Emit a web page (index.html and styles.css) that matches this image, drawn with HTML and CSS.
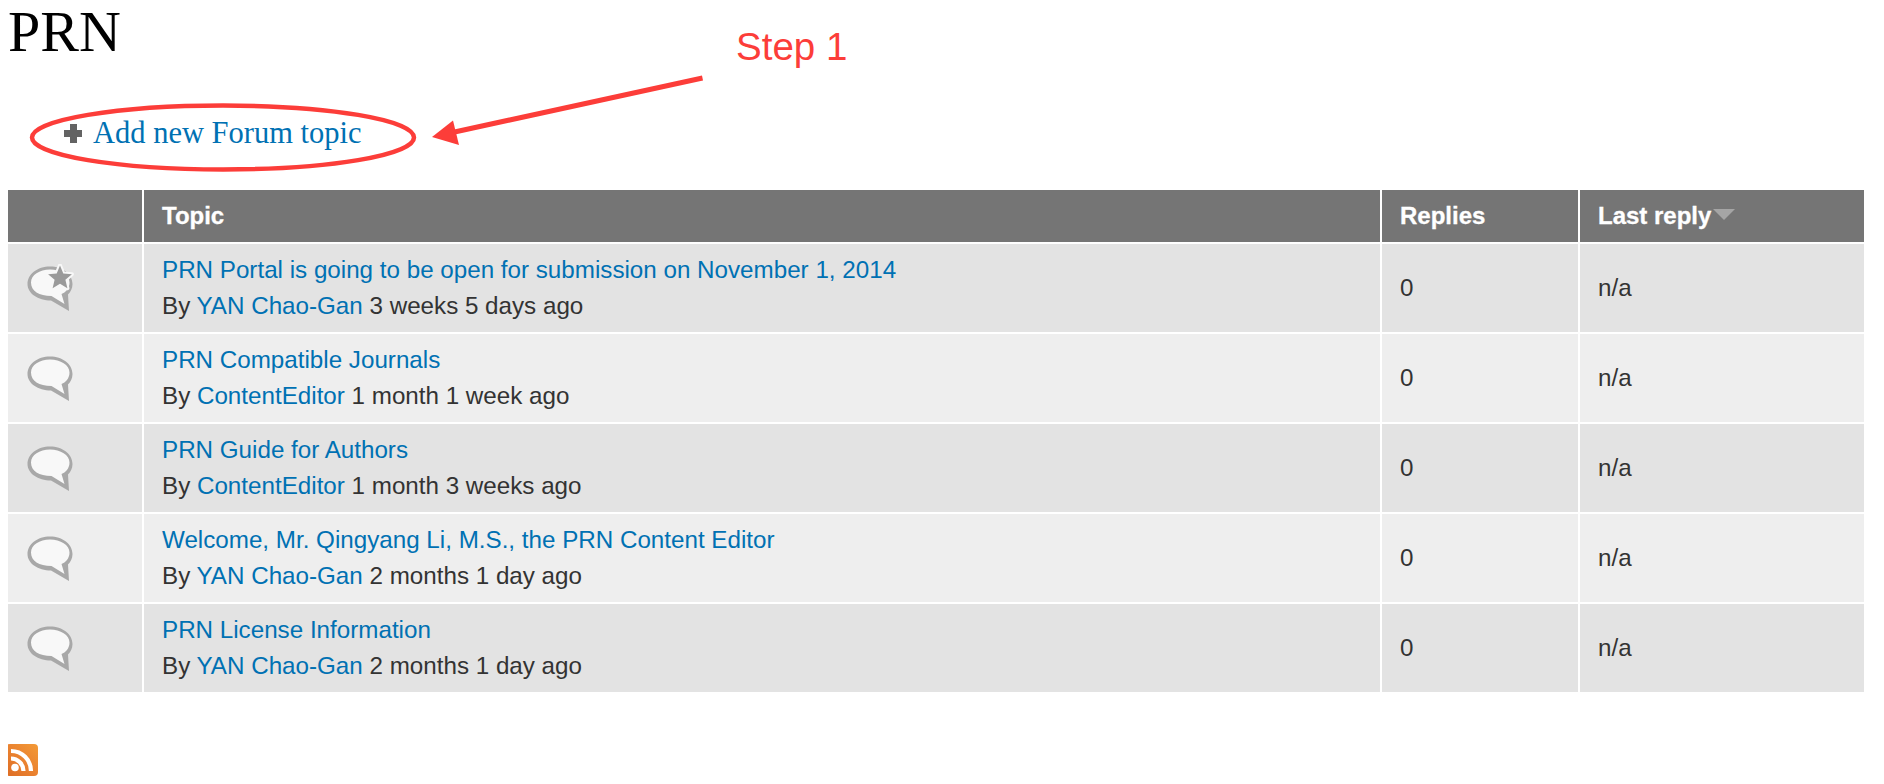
FILE: index.html
```html
<!DOCTYPE html>
<html lang="en">
<head>
<meta charset="utf-8">
<title>PRN</title>
<link rel="stylesheet" href="styles.css">
</head>
<body>
<svg width="0" height="0" class="defs">
  <defs>
    <symbol id="bubble" viewBox="0 0 48 48">
      <path d="M1.500 20C1.500 10 11.500 2.500 24 2.500S46.500 10 46.500 20c0 4.500-2 8-4.500 10.500L43 47 25 36.500C12 36.500 1.500 29.500 1.500 20z" fill="#a8a8a8"/>
      <path d="M5 18.500C5 11 13.500 5.500 24 5.500s19.500 5.500 19.500 13c0 6-4 10-8 11.500l3 10-13-8C13 32 5 27 5 18.500z" fill="#f8f8f8"/>
    </symbol>
  </defs>
</svg>
<h1 class="page-title">PRN</h1>
<ul class="action-links">
  <li><span class="plus" aria-hidden="true"></span><a href="#">Add new Forum topic</a></li>
</ul>
<table class="topics">
  <colgroup><col class="c-icon"><col class="c-topic"><col class="c-replies"><col class="c-last"></colgroup>
  <thead>
    <tr><th></th><th>Topic</th><th>Replies</th><th>Last reply<span class="sort"></span></th></tr>
  </thead>
  <tbody>
    <tr>
      <td class="icon">
        <svg class="topic-icon" viewBox="0 0 48 48">
          <use href="#bubble"/>
          <path d="M34 1.500l3.300 8 8.600.7-6.500 5.600 2 8.400-7.400-4.500-7.400 4.500 2-8.400-6.500-5.600 8.600-.7z" fill="#9a9a9a" stroke="#f8f8f8" stroke-width="4" stroke-linejoin="round" paint-order="stroke"/>
        </svg>
      </td>
      <td><a href="#">PRN Portal is going to be open for submission on November 1, 2014</a><div class="by">By <a href="#">YAN Chao-Gan</a> 3 weeks 5 days ago</div></td>
      <td>0</td><td>n/a</td>
    </tr>
    <tr>
      <td class="icon"><svg class="topic-icon" viewBox="0 0 48 48"><use href="#bubble"/></svg></td>
      <td><a href="#">PRN Compatible Journals</a><div class="by">By <a href="#">ContentEditor</a> 1 month 1 week ago</div></td>
      <td>0</td><td>n/a</td>
    </tr>
    <tr>
      <td class="icon"><svg class="topic-icon" viewBox="0 0 48 48"><use href="#bubble"/></svg></td>
      <td><a href="#">PRN Guide for Authors</a><div class="by">By <a href="#">ContentEditor</a> 1 month 3 weeks ago</div></td>
      <td>0</td><td>n/a</td>
    </tr>
    <tr>
      <td class="icon"><svg class="topic-icon" viewBox="0 0 48 48"><use href="#bubble"/></svg></td>
      <td><a href="#">Welcome, Mr. Qingyang Li, M.S., the PRN Content Editor</a><div class="by">By <a href="#">YAN Chao-Gan</a> 2 months 1 day ago</div></td>
      <td>0</td><td>n/a</td>
    </tr>
    <tr>
      <td class="icon"><svg class="topic-icon" viewBox="0 0 48 48"><use href="#bubble"/></svg></td>
      <td><a href="#">PRN License Information</a><div class="by">By <a href="#">YAN Chao-Gan</a> 2 months 1 day ago</div></td>
      <td>0</td><td>n/a</td>
    </tr>
  </tbody>
</table>
<a class="feed" href="#" aria-label="RSS feed">
  <svg viewBox="0 0 32 32" width="32" height="32">
    <defs><linearGradient id="rss" x1="1" y1="0" x2="0" y2="1"><stop offset="0" stop-color="#f39a36"/><stop offset=".5" stop-color="#ea8230"/><stop offset="1" stop-color="#dd6c24"/></linearGradient></defs>
    <rect width="32" height="32" rx="4" fill="url(#rss)"/>
    <circle cx="9" cy="23.500" r="3.800" fill="#fff"/>
    <path d="M5 14.500A12.500 12.500 0 0 1 17.500 27M5 7A20 20 0 0 1 25 27" fill="none" stroke="#fff" stroke-width="4.200"/>
  </svg>
</a>
<svg class="annotation" width="1884" height="200" viewBox="0 0 1884 200" aria-hidden="true">
  <ellipse cx="223" cy="137.500" rx="191" ry="32" fill="none" stroke="#fc3d39" stroke-width="4.500"/>
  <path d="M702.500 78L450 133" fill="none" stroke="#fc3d39" stroke-width="5"/>
  <path d="M432 137l21-16.500 6 24.500z" fill="#fc3d39"/>
</svg>
<div class="step">Step 1</div>
</body>
</html>
```
FILE: styles.css
```css
html, body { background: #fff; }
body {
  margin: 8px;
  font-family: "Liberation Sans", Arial, sans-serif;
  font-size: 24.200px;
  color: #333;
  position: relative;
}
.defs { position: absolute; }
a { color: #0071b3; text-decoration: none; }
.page-title {
  margin: 0;
  font: normal 58px/40px "Liberation Serif", "Times New Roman", serif;
  color: #000;
  padding-top: 4px;
  height: 41px;
}
.action-links {
  list-style: none;
  margin: 0;
  padding: 62px 0 0 56px;
  height: 135px;
  box-sizing: border-box;
  font: 30.500px/36px "Liberation Serif", "Times New Roman", serif;
}
.action-links li { display: flex; align-items: center; gap: 11px; }
.plus {
  width: 18px;
  height: 19px;
  background:
    linear-gradient(#636363, #636363) center / 18px 7px no-repeat,
    linear-gradient(#636363, #636363) center / 7px 19px no-repeat;
}
.topics {
  border-collapse: separate;
  border-spacing: 2px;
  table-layout: fixed;
  width: 1860px;
  margin: 0 0 0 -2px;
}
.c-icon { width: 134px; }
.c-replies { width: 196px; }
.c-last { width: 284px; }
.topics th {
  background: #757575;
  color: #fff;
  font-weight: bold;
  text-align: left;
  height: 52px;
  padding: 0 18px;
  font-size: 24px;
  box-sizing: border-box;
  -webkit-text-stroke: .3px #fff;
}
.topics td {
  height: 88px;
  padding: 0 18px;
  box-sizing: border-box;
  background: #e3e3e3;
  line-height: 36px;
}
.topics tbody tr:nth-child(even) td { background: #eee; }
.sort {
  display: inline-block;
  width: 0;
  height: 0;
  margin-left: 2px;
  vertical-align: 4px;
  border-left: 11px solid transparent;
  border-right: 11px solid transparent;
  border-top: 11px solid #a5a5a5;
}
.topics td.icon { padding: 0 0 0 18px; }
.topic-icon { display: block; width: 48px; height: 48px; filter: blur(.7px); }
.feed { display: block; width: 32px; height: 32px; margin: 50px 0 0 -2px; }
.feed svg { display: block; }
.annotation { position: absolute; left: -8px; top: -8px; pointer-events: none; }
.step {
  position: absolute;
  left: 728px;
  top: 16px;
  font-size: 38.500px;
  line-height: 46px;
  color: #fc3d39;
}
```
